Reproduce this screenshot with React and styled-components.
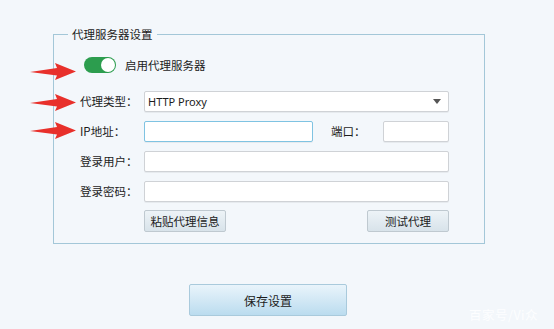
import React from "react";
import styled, { createGlobalStyle } from "styled-components";

const Global = createGlobalStyle`
  html, body { margin: 0; padding: 0; }
  body {
    background: #f3f7fb;
    font-family: "Microsoft YaHei", "Noto Sans CJK SC", "Noto Sans", sans-serif;
    color: #1c1c1c;
  }
`;

const Page = styled.div`
  position: relative;
  width: 554px;
  height: 329px;
  overflow: hidden;
  background: #f3f7fb;
  padding-top: 26px;
  box-sizing: border-box;
`;

const Group = styled.fieldset`
  margin: 0 0 0 53px;
  width: 432px;
  box-sizing: border-box;
  border: 1px solid #a3c7d8;
  padding: 0 0 11px 26px;
  min-inline-size: 0;
`;

const Legend = styled.legend`
  margin-left: -12px;
  padding: 0 4px;
  font-size: 11.5px;
  line-height: 16px;
  color: #222;
`;

const ToggleRow = styled.div`
  display: flex;
  align-items: center;
  gap: 9px;
  margin: 15px 0 0 4px;
  font-size: 11.5px;
  line-height: 16px;
`;

const Switch = styled.span`
  position: relative;
  width: 32px;
  height: 16px;
  border-radius: 8px;
  background: #2c9d4e;
  flex: none;
  &::after {
    content: "";
    position: absolute;
    right: 1px;
    top: 1px;
    width: 14px;
    height: 14px;
    border-radius: 50%;
    background: #fff;
  }
`;

const Form = styled.div`
  display: grid;
  grid-template-columns: 64px 1fr;
  row-gap: 9px;
  margin-top: 18px;
  width: 369px;
`;

const Label = styled.span`
  font-size: 11.5px;
  line-height: 21px;
  height: 21px;
  white-space: nowrap;
`;

const Field = styled.div`
  height: 21px;
  box-sizing: border-box;
  width: ${(p) => p.$w || "100%"};
  background: #fff;
  border: 1px solid ${(p) => (p.$focus ? "#7fc3e2" : "#cfd2d6")};
  border-radius: 2px;
  box-shadow: 0 1px 0 rgba(0, 0, 0, 0.05);
  display: flex;
  align-items: center;
  padding: 0 3px;
  font-family: "Noto Sans", "Open Sans", sans-serif;
  font-size: 11px;
  color: #1c1c1c;
`;

const SelectText = styled.span`
  flex: 1;
`;

const Caret = styled.span`
  width: 0;
  height: 0;
  border-left: 4.5px solid transparent;
  border-right: 4.5px solid transparent;
  border-top: 5px solid #555;
  margin-right: 4px;
`;

const InlineRow = styled.div`
  display: flex;
  align-items: center;
`;

const PortLabel = styled(Label)`
  margin-left: 18px;
  width: 52px;
`;

const ButtonRow = styled.div`
  display: flex;
  justify-content: space-between;
  margin-top: -1px;
`;

const SmallButton = styled.button`
  width: 82px;
  height: 22px;
  box-sizing: border-box;
  border: 1px solid #bfc9d0;
  border-radius: 2px;
  background: linear-gradient(#edf3f7, #d8e3ea);
  font-family: inherit;
  font-size: 11.5px;
  color: #1c1c1c;
  padding: 0;
`;

const Footer = styled.div`
  display: flex;
  margin: 40px 0 0 189px;
`;

const SaveButton = styled.button`
  width: 158px;
  height: 32px;
  box-sizing: border-box;
  border: 1px solid #a9cadc;
  border-radius: 2px;
  background: linear-gradient(#e9f4fb, #bbdcef);
  font-family: inherit;
  font-size: 12px;
  color: #1c1c1c;
  padding: 0;
`;

const Arrow = styled.svg`
  position: absolute;
  left: 30px;
  top: ${(p) => p.$top}px;
  width: 46px;
  height: 17px;
`;

const Watermark = styled.span`
  position: absolute;
  left: 469px;
  top: 305px;
  font-size: 12.5px;
  color: #fdfeff;
  letter-spacing: 0.5px;
`;

const RedArrow = ({ top }) => (
  <Arrow $top={top} viewBox="0 0 46 17">
    <path d="M0 9 L27 5 L25 0 L46 8.5 L25 17 L27 12.5 Z" fill="#e8302b" />
  </Arrow>
);

export default function App() {
  return (
    <Page>
      <Global />
      <Group>
        <Legend>代理服务器设置</Legend>
        <ToggleRow>
          <Switch />
          <span>启用代理服务器</span>
        </ToggleRow>
        <Form>
          <Label>代理类型：</Label>
          <Field>
            <SelectText>HTTP Proxy</SelectText>
            <Caret />
          </Field>
          <Label>IP地址：</Label>
          <InlineRow>
            <Field $w="169px" $focus />
            <PortLabel>端口：</PortLabel>
            <Field $w="66px" />
          </InlineRow>
          <Label>登录用户：</Label>
          <Field />
          <Label>登录密码：</Label>
          <Field />
          <span />
          <ButtonRow>
            <SmallButton>粘贴代理信息</SmallButton>
            <SmallButton>测试代理</SmallButton>
          </ButtonRow>
        </Form>
      </Group>
      <Footer>
        <SaveButton>保存设置</SaveButton>
      </Footer>
      <RedArrow top={63} />
      <RedArrow top={94} />
      <RedArrow top={122} />
      <Watermark>百家号/Vi众</Watermark>
    </Page>
  );
}
